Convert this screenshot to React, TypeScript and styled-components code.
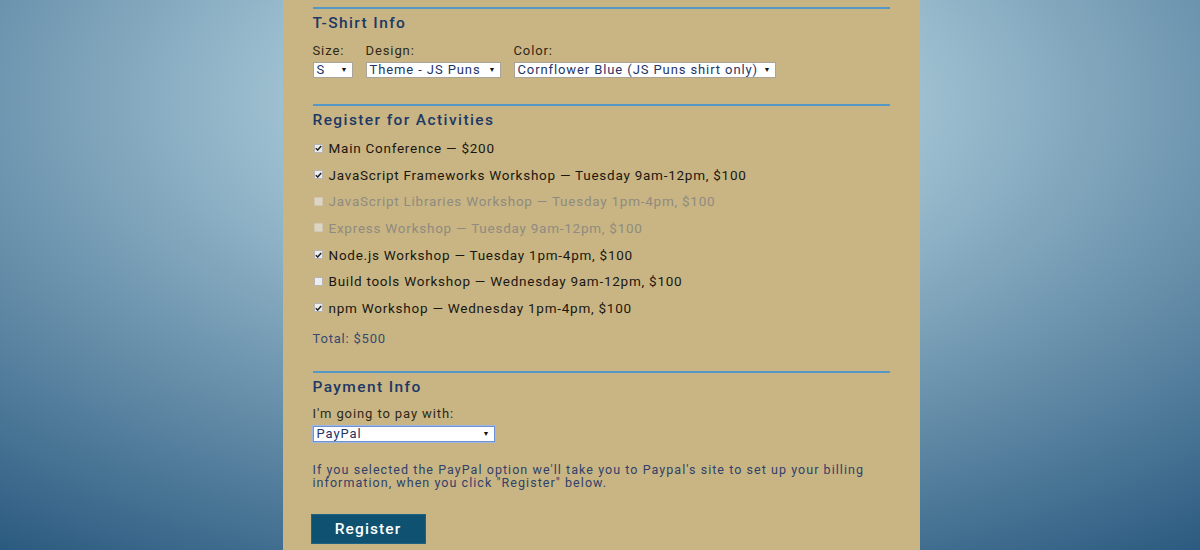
import React from "react";
import styled, { createGlobalStyle } from "styled-components";

const GlobalStyle = createGlobalStyle`
  html, body { margin: 0; padding: 0; }
  body {
    width: 1200px;
    height: 550px;
    overflow: hidden;
    font-family: Roboto, "Liberation Sans", Arial, sans-serif;
    background: radial-gradient(ellipse 1030px 555px at 601px 100px, #d0ecf2 0%, #9dbfd0 31%, #2b5a80 100%);
  }
`;

const Page = styled.div`
  display: flex;
  justify-content: center;
  padding-left: 2px;
  height: 550px;
`;

const Panel = styled.div`
  width: 577px;
  padding: 7px 30px 0;
  background: #c9b583;
  height: 543px;
  overflow: hidden;
`;

const Section = styled.section<{ $gapBottom?: number }>`
  border-top: 2px solid #5597c6;
  padding-bottom: ${(p) => p.$gapBottom ?? 0}px;
`;

const Heading = styled.h2`
  margin: 5px 0 0;
  font-size: 15.5px;
  line-height: 18px;
  font-weight: 500;
  letter-spacing: 1.4px;
  color: #1e3866;
`;

const FieldRow = styled.div`
  display: flex;
  gap: 13px;
  margin-top: 11px;
`;

const Field = styled.div`
  display: flex;
  flex-direction: column;
  gap: 3px;
`;

const Label = styled.div`
  font-size: 13px;
  line-height: 16px;
  letter-spacing: 0.9px;
  color: #2f2818;
`;

const SelectBox = styled.div<{ $w: number; $focus?: boolean }>`
  display: flex;
  align-items: center;
  justify-content: space-between;
  box-sizing: border-box;
  width: ${(p) => p.$w}px;
  height: 16px;
  padding: 0 4px 0 3px;
  background: #fff;
  border: 1px solid ${(p) => (p.$focus ? "#6d93d6" : "#a8a49a")};
  box-shadow: ${(p) => (p.$focus ? "0 0 0 1px #9db6e3" : "none")};
  font-size: 13px;
  line-height: 14px;
  letter-spacing: 0.9px;
  color: #1f3466;
  white-space: nowrap;
`;

const Arrow = styled.span`
  font-size: 7px;
  letter-spacing: 0;
  color: #111;
  margin-left: 4px;
`;

const ActivityList = styled.div`
  display: flex;
  flex-direction: column;
  gap: 10.67px;
  margin-top: 11px;
`;

const Activity = styled.label<{ $disabled?: boolean }>`
  display: flex;
  align-items: center;
  gap: 6px;
  height: 16px;
  font-size: 13.5px;
  letter-spacing: 0.75px;
  color: ${(p) => (p.$disabled ? "#8f8b80" : "#1a1712")};
`;

const Box = styled.span<{ $disabled?: boolean }>`
  display: inline-flex;
  align-items: center;
  justify-content: center;
  box-sizing: border-box;
  width: 9px;
  height: 9px;
  margin-left: 1px;
  border-radius: 1px;
  background: ${(p) => (p.$disabled ? "#dcd5c4" : "#ededed")};
  border: 1px solid ${(p) => (p.$disabled ? "#cfc7b3" : "#b5b5b5")};
`;

const Total = styled.div`
  margin-top: 15px;
  font-size: 13px;
  line-height: 16px;
  letter-spacing: 0.8px;
  color: #354a72;
`;

const PayLabel = styled(Label)`
  margin-top: 10px;
  margin-bottom: 4px;
`;

const Note = styled.p`
  margin: 21px 0 0;
  font-size: 12.5px;
  line-height: 13px;
  letter-spacing: 1.05px;
  color: #2f416a;
`;

const RegisterButton = styled.button`
  margin: 25px 0 0 -2px;
  width: 115px;
  height: 30px;
  background: #0f5171;
  border: 1px solid #1f6384;
  color: #fff;
  font-family: Roboto, "Liberation Sans", Arial, sans-serif;
  font-size: 15.5px;
  font-weight: 500;
  letter-spacing: 1.1px;
  cursor: pointer;
`;

const Check = () => (
  <svg width="7" height="6" viewBox="0 0 7 6">
    <path d="M0.8 3.2 L2.7 5 L6.2 0.9" fill="none" stroke="#222" strokeWidth="1.5" />
  </svg>
);

const activities = [
  { text: "Main Conference — $200", checked: true },
  { text: "JavaScript Frameworks Workshop — Tuesday 9am-12pm, $100", checked: true },
  { text: "JavaScript Libraries Workshop — Tuesday 1pm-4pm, $100", disabled: true },
  { text: "Express Workshop — Tuesday 9am-12pm, $100", disabled: true },
  { text: "Node.js Workshop — Tuesday 1pm-4pm, $100", checked: true },
  { text: "Build tools Workshop — Wednesday 9am-12pm, $100" },
  { text: "npm Workshop — Wednesday 1pm-4pm, $100", checked: true },
];

export default function App() {
  return (
    <>
      <GlobalStyle />
      <Page>
        <Panel>
          <Section $gapBottom={26}>
            <Heading>T-Shirt Info</Heading>
            <FieldRow>
              <Field>
                <Label>Size:</Label>
                <SelectBox $w={40}>
                  S<Arrow>▼</Arrow>
                </SelectBox>
              </Field>
              <Field>
                <Label>Design:</Label>
                <SelectBox $w={135}>
                  Theme - JS Puns<Arrow>▼</Arrow>
                </SelectBox>
              </Field>
              <Field>
                <Label>Color:</Label>
                <SelectBox $w={262}>
                  Cornflower Blue (JS Puns shirt only)<Arrow>▼</Arrow>
                </SelectBox>
              </Field>
            </FieldRow>
          </Section>
          <Section $gapBottom={24}>
            <Heading>Register for Activities</Heading>
            <ActivityList>
              {activities.map((a) => (
                <Activity key={a.text} $disabled={a.disabled}>
                  <Box $disabled={a.disabled}>{a.checked ? <Check /> : null}</Box>
                  {a.text}
                </Activity>
              ))}
            </ActivityList>
            <Total>Total: $500</Total>
          </Section>
          <Section>
            <Heading>Payment Info</Heading>
            <PayLabel>I'm going to pay with:</PayLabel>
            <SelectBox $w={182} $focus>
              PayPal<Arrow>▼</Arrow>
            </SelectBox>
            <Note>
              If you selected the PayPal option we'll take you to Paypal's site to set up your billing
              <br />
              information, when you click "Register" below.
            </Note>
            <RegisterButton>Register</RegisterButton>
          </Section>
        </Panel>
      </Page>
    </>
  );
}
